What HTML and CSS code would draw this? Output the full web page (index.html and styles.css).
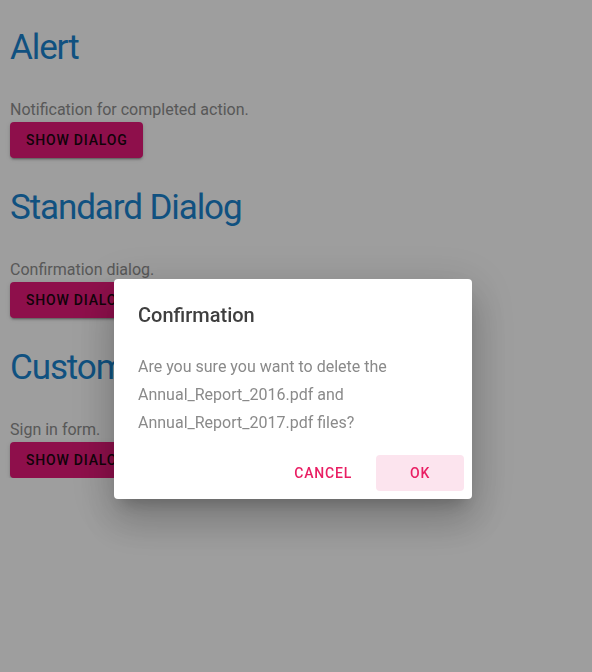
FILE: index.html
```html
<!DOCTYPE html>
<html lang="en">
<head>
<meta charset="utf-8">
<title>Dialogs</title>
<link rel="stylesheet" href="styles.css">
</head>
<body>
<main class="page">
  <section class="demo">
    <h2 class="demo-title">Alert</h2>
    <p class="demo-text">Notification for completed action.</p>
    <button class="raised-btn" type="button">Show dialog</button>
  </section>
  <section class="demo">
    <h2 class="demo-title">Standard Dialog</h2>
    <p class="demo-text">Confirmation dialog.</p>
    <button class="raised-btn" type="button">Show dialog</button>
  </section>
  <section class="demo">
    <h2 class="demo-title">Custom Dialog</h2>
    <p class="demo-text">Sign in form.</p>
    <button class="raised-btn" type="button">Show dialog</button>
  </section>
</main>

<div class="backdrop">
  <div class="dialog" role="dialog" aria-labelledby="dlg-title">
    <h3 class="dialog-title" id="dlg-title">Confirmation</h3>
    <p class="dialog-body">Are you sure you want to delete the Annual_Report_2016.pdf and Annual_Report_2017.pdf files?</p>
    <div class="dialog-actions">
      <button class="flat-btn" type="button">Cancel</button>
      <button class="flat-btn flat-btn-primary" type="button">OK</button>
    </div>
  </div>
</div>
</body>
</html>
```

FILE: styles.css
```css
html, body {
  margin: 0;
  padding: 0;
  background: #ffffff;
  font-family: Roboto, "Noto Sans", sans-serif;
}

.page {
  padding: 24px 10px 0;
  display: flex;
  flex-direction: column;
  gap: 26px;
}

.demo {
  display: flex;
  flex-direction: column;
  align-items: flex-start;
}

.demo-title {
  margin: 0 0 26px;
  font-size: 35px;
  line-height: 48px;
  font-weight: 400;
  letter-spacing: -1.1px;
  color: #1a84cf;
}

.demo-text {
  margin: 0;
  font-size: 16px;
  line-height: 24px;
  color: #8e8e8e;
}

.raised-btn {
  height: 36px;
  padding: 0 16px;
  border: 0;
  border-radius: 4px;
  background: #e6197a;
  color: #1c0610;
  font-family: inherit;
  font-size: 14px;
  font-weight: 500;
  letter-spacing: 0.8px;
  text-transform: uppercase;
  box-shadow: 0 2px 2px rgba(0,0,0,.14), 0 3px 1px -2px rgba(0,0,0,.2), 0 1px 5px rgba(0,0,0,.12);
}

.backdrop {
  position: fixed;
  inset: 0;
  background: rgba(0,0,0,.38);
  display: flex;
  align-items: flex-start;
  padding: 279px 0 0 114px;
}

.dialog {
  width: 358px;
  box-sizing: border-box;
  background: #ffffff;
  border-radius: 4px;
  box-shadow: 0 11px 15px -7px rgba(0,0,0,.2), 0 24px 38px 3px rgba(0,0,0,.14), 0 9px 46px 8px rgba(0,0,0,.12);
  display: flex;
  flex-direction: column;
}

.dialog-title {
  margin: 0;
  padding: 24px 24px 26px;
  font-size: 20px;
  line-height: 24px;
  font-weight: 500;
  color: #3f3f3f;
}

.dialog-body {
  margin: 0;
  padding: 0 24px 10px;
  font-size: 16px;
  line-height: 28px;
  color: #8a8a8a;
}

.dialog-actions {
  display: flex;
  justify-content: flex-end;
  gap: 8px;
  padding: 8px;
}

.flat-btn {
  min-width: 88px;
  height: 36px;
  padding: 0 16px;
  border: 0;
  border-radius: 4px;
  background: transparent;
  color: #e91e63;
  font-family: inherit;
  font-size: 14px;
  font-weight: 500;
  letter-spacing: 0.8px;
  text-transform: uppercase;
}

.flat-btn-primary {
  background: #fce4ee;
}
```
